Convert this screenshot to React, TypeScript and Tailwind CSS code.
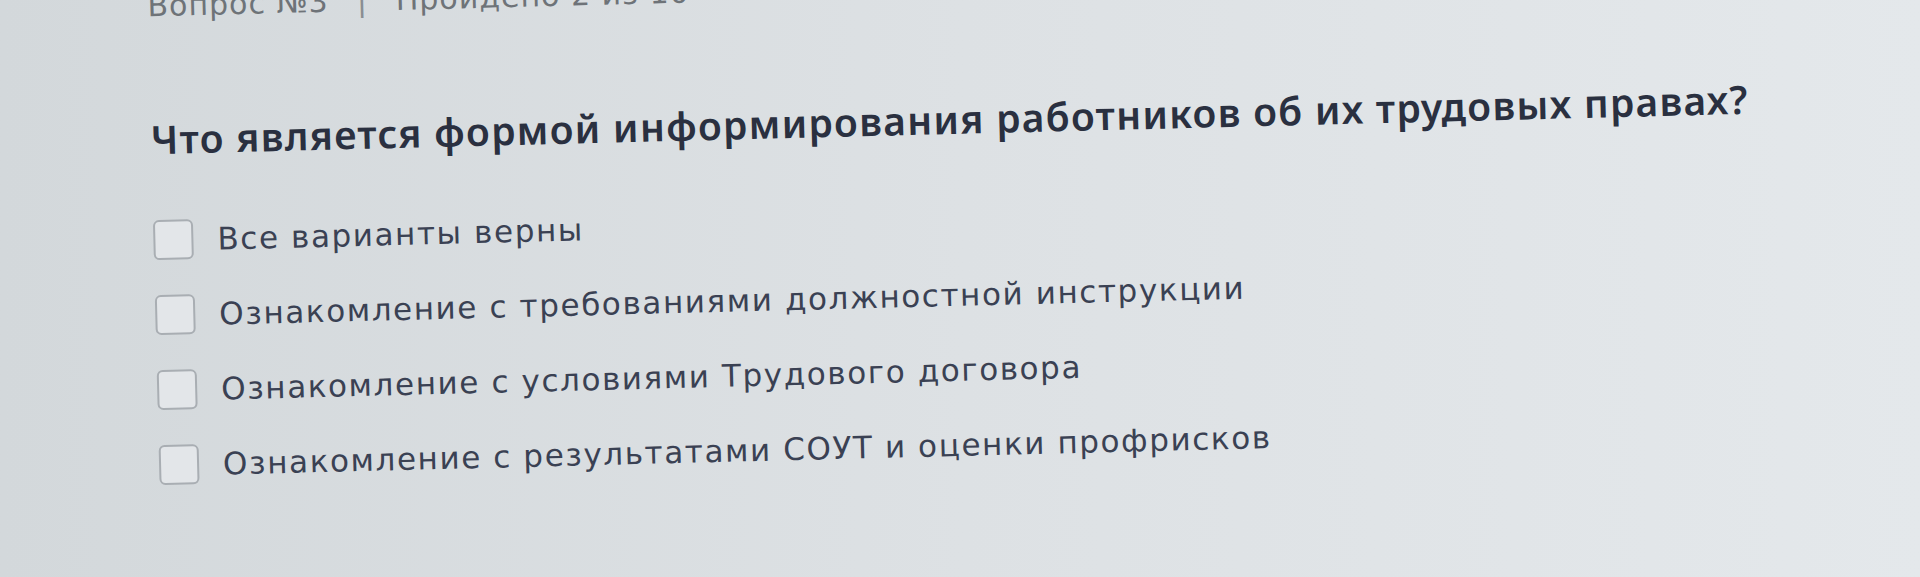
export default function App() {
  const options = [
    "Все варианты верны",
    "Ознакомление с требованиями должностной инструкции",
    "Ознакомление с условиями Трудового договора",
    "Ознакомление с результатами СОУТ и оценки профрисков",
  ];

  return (
    <div className="h-[577px] w-full overflow-hidden bg-gradient-to-r from-[#d3d8db] via-[#dde1e4] to-[#e4e8eb]">
      <div className="origin-top-left rotate-[-1.45deg] pl-[147px]">
        <div className="-mt-[11px] flex items-center gap-[28px] font-['DejaVu_Sans',sans-serif] text-[30px] leading-[42px] tracking-[1px] text-[#6e7378]">
          <span>Вопрос №3</span>
          <span className="text-[#8a8e92]">|</span>
          <span>Пройдено 2 из 10</span>
        </div>

        <h1 className="mt-[90px] font-['Noto_Sans',sans-serif] text-[39px] font-semibold leading-[44px] tracking-[1.3px] text-[#2a3040]">
          Что является формой информирования работников об их трудовых правах?
        </h1>

        <ul className="mt-[59px] flex flex-col gap-[35px]">
          {options.map((o) => (
            <li key={o} className="flex items-center gap-6">
              <span className="h-10 w-10 shrink-0 rounded-md border-2 border-[#a9aeb3] bg-[#e3e6e9]" />
              <span className="font-['DejaVu_Sans',sans-serif] text-[31px] leading-10 tracking-[1.6px] text-[#3a4153]">
                {o}
              </span>
            </li>
          ))}
        </ul>
      </div>
    </div>
  );
}
